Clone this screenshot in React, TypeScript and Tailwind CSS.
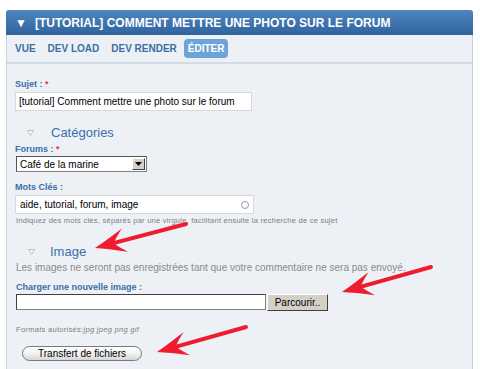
import React from "react";

const Tri = () => (
  <svg width="7" height="6" viewBox="0 0 7 6" className="shrink-0">
    <path d="M0.5 0.5 L6.5 0.5 L3.5 5.5 Z" fill="#f4f6f8" stroke="#b8c2cc" strokeWidth="1" />
  </svg>
);

const Arrow = ({ x1, y1, x2, y2 }: { x1: number; y1: number; x2: number; y2: number }) => {
  const dx = x2 - x1;
  const dy = y2 - y1;
  const len = Math.sqrt(dx * dx + dy * dy);
  const ux = dx / len;
  const uy = dy / len;
  const px = -uy;
  const py = ux;
  const hl = 28;
  const hw = 12;
  const bx = x2 - ux * hl;
  const by = y2 - uy * hl;
  const mx = x2 - ux * (hl - 8);
  const my = y2 - uy * (hl - 8);
  const w1x = bx + px * hw - ux * 3;
  const w1y = by + py * hw - uy * 3;
  const w2x = bx - px * hw - ux * 3;
  const w2y = by - py * hw - uy * 3;
  const d = `M${x2} ${y2} Q${x2 - ux * 12 + px * 4} ${y2 - uy * 12 + py * 4} ${w1x} ${w1y} Q${mx + px * 2} ${my + py * 2} ${mx} ${my} Q${mx - px * 2} ${my - py * 2} ${w2x} ${w2y} Q${x2 - ux * 12 - px * 4} ${y2 - uy * 12 - py * 4} ${x2} ${y2} Z`;
  return (
    <g>
      <line x1={x1} y1={y1} x2={mx} y2={my} stroke="#ee1c2e" strokeWidth="4" strokeLinecap="round" />
      <path d={d} fill="#ee1c2e" />
    </g>
  );
};

export default function App() {
  return (
    <div className="relative w-[480px] h-[369px] overflow-hidden bg-white" style={{ fontFamily: "'Liberation Sans', Arial, sans-serif" }}>
      <div className="ml-[6px] mt-[10px] w-[467px] h-[400px] bg-[#edf1f5] border-x border-[#c6d3de] rounded-t-[3px]">
        <div className="h-[25px] -mx-px rounded-t-[3px] bg-gradient-to-b from-[#4f86c0] to-[#30649e] flex items-center pl-[9px] text-white font-bold text-[12px]">
          <span className="text-[12px] mr-[8px] leading-none">▼</span>
          <span>[TUTORIAL] COMMENT METTRE UNE PHOTO SUR LE FORUM</span>
        </div>
        <div className="h-[29px] border-b-2 border-[#d0dde8] flex items-center pl-[8px] gap-[12px] text-[10px] font-bold text-[#3c6fa6]">
          <span>VUE</span>
          <span>DEV LOAD</span>
          <span>DEV RENDER</span>
          <span className="-ml-[5px] bg-[#6ca5d5] text-white rounded-[4px] px-[4px] h-[19px] flex items-center">ÉDITER</span>
        </div>
        <div className="pl-[8px] pt-[15px]">
          <div className="text-[9px] font-bold text-[#3b6ea6] leading-[11px]">
            Sujet : <span className="text-[#e33]">*</span>
          </div>
          <div className="mt-[2px] w-[237px] h-[19px] bg-white border border-[#d3d9df] flex items-center pl-[3px] text-[10px] text-black">
            [tutorial] Comment mettre une photo sur le forum
          </div>
          <div className="mt-[14px] flex items-center h-[16px]">
            <div className="ml-[12px] w-[24px]"><Tri /></div>
            <span className="text-[13px] text-[#3a70aa]">Catégories</span>
          </div>
          <div className="mt-[3px] text-[9px] font-bold text-[#3b6ea6] leading-[11px]">
            Forums : <span className="text-[#e33]">*</span>
          </div>
          <div className="mt-[1px] ml-px w-[131px] h-[16px] bg-white border border-[#7f7f7f] border-t-[#555] border-l-[#555] flex items-center text-[10px] text-black">
            <span className="flex-1 pl-[3px]">Café de la marine</span>
            <span className="w-[13px] h-[12px] mr-px bg-[#d4d0c8] border border-[#fff] border-r-[#404040] border-b-[#404040] flex items-center justify-center">
              <svg width="7" height="4" viewBox="0 0 7 4"><path d="M0 0 L7 0 L3.5 4 Z" fill="#000" /></svg>
            </span>
          </div>
          <div className="mt-[10px] text-[9px] font-bold text-[#3b6ea6] leading-[11px]">Mots Clés :</div>
          <div className="mt-[2px] w-[239px] h-[19px] bg-white border border-[#d3d9df] flex items-center pl-[4px] pr-[4px] text-[10px] text-black">
            <span className="flex-1">aide, tutorial, forum, image</span>
            <span className="w-[8px] h-[8px] rounded-full border border-[#999]" />
          </div>
          <div className="mt-[2px] ml-px text-[7.5px] tracking-[0.25px] text-[#7d7d7d] leading-[10px]">
            Indiquez des mots clés, séparés par une virgule, facilitant ensuite la recherche de ce sujet
          </div>
          <div className="mt-[18px] flex items-center h-[16px]">
            <div className="ml-[13px] w-[22px]"><Tri /></div>
            <span className="text-[13px] text-[#3a70aa]">Image</span>
          </div>
          <div className="mt-[2px] ml-px text-[10px] text-[#8a8a8a] leading-[12px]">
            Les images ne seront pas enregistrées tant que votre commentaire ne sera pas envoyé.
          </div>
          <div className="mt-[8px] ml-px text-[9px] font-bold text-[#3b6ea6] leading-[11px]">Charger une nouvelle image :</div>
          <div className="mt-px ml-px flex items-start">
            <div className="w-[250px] h-[16px] bg-white border border-[#7f7f7f] border-t-[#404040] border-l-[#404040]" />
            <div className="ml-px w-[61px] h-[17px] bg-[#d4d0c8] border border-[#fff] border-r-[#404040] border-b-[#404040] flex items-center justify-center text-[10px] text-black">
              Parcourir..
            </div>
          </div>
          <div className="mt-[14px] ml-px text-[7.5px] tracking-[0.3px] text-[#7d7d7d] leading-[10px]">
            Formats autorisés:<span className="italic">jpg jpeg png gif</span>
          </div>
          <div className="mt-[11px] ml-[7px] w-[120px] h-[15px] rounded-full border border-[#7a7a7a] bg-gradient-to-b from-white via-[#f2f2f2] to-[#d6d6d6] flex items-center justify-center text-[10px] text-black">
            Transfert de fichiers
          </div>
        </div>
      </div>
      <svg className="absolute inset-0 pointer-events-none" width="480" height="369">
        <Arrow x1={186} y1={224} x2={95} y2={248} />
        <Arrow x1={431} y1={267} x2={342} y2={292} />
        <Arrow x1={246} y1={327} x2={157} y2={352} />
      </svg>
    </div>
  );
}
